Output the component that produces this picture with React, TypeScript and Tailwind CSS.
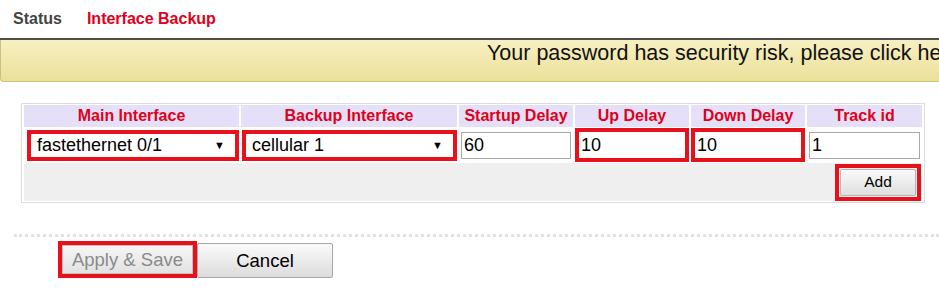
import React from 'react';

const RED = 'border-[#e8111b]';

function FakeSelect({ value }: { value: string }) {
  return (
    <div className={`border-4 ${RED} h-[31px] bg-white flex items-center justify-between pl-[6px] pr-[10px]`}>
      <span className="text-[18px] text-black leading-none">{value}</span>
      <span className="text-[11px] text-black leading-none">▼</span>
    </div>
  );
}

function TextBox({ value, marked }: { value: string; marked?: boolean }) {
  if (marked) {
    return (
      <div className={`border-4 ${RED} h-[34px] bg-white flex items-center px-[2px]`}>
        <span className="text-[18px] text-black leading-none">{value}</span>
      </div>
    );
  }
  return (
    <div className="h-[27px] mx-[2px] bg-white border border-[#a9a9a9] flex items-center px-[2px]">
      <span className="text-[18px] text-black leading-none">{value}</span>
    </div>
  );
}

export default function App() {
  const headers = ['Main Interface', 'Backup Interface', 'Startup Delay', 'Up Delay', 'Down Delay', 'Track id'];
  const widths = ['w-[215px]', 'w-[216px]', 'w-[114px]', 'w-[114px]', 'w-[114px]', 'w-[115px]'];

  return (
    <div className="w-[939px] h-[300px] bg-white overflow-hidden font-['Liberation_Sans',Arial,sans-serif]">
      {/* tabs */}
      <div className="h-[38px] flex items-center pl-[13px] gap-[25px] text-[16px] font-bold">
        <span className="text-[#444]">Status</span>
        <span className="text-[#e0001b]">Interface Backup</span>
      </div>
      <div className="h-[2px] bg-[#4d4d4d]" />

      {/* warning banner */}
      <div className="h-[42px] rounded-bl-[4px] border-l border-b border-[#cdbf7e] bg-gradient-to-b from-[#f8f0c2] to-[#ebe09a] flex items-start pt-[1px] pl-[486px] overflow-hidden whitespace-nowrap">
        <span className="text-[21.5px] leading-[24px] text-[#111]">Your password has security risk, please click here to change!</span>
      </div>

      {/* interface table */}
      <div className="pt-[21px] pl-[21px]">
        <table className="border border-[#dcdcdc] border-separate border-spacing-x-[2px] border-spacing-y-[1px]">
          <thead>
            <tr>
              {headers.map((h, i) => (
                <th key={h} className={`${widths[i]} h-[22px] bg-[#e5e0f7] text-[#e0001b] text-[16px] font-bold text-center leading-none p-0`}>
                  {h}
                </th>
              ))}
            </tr>
          </thead>
          <tbody>
            <tr>
              <td className="p-0 pl-[3px]"><FakeSelect value="fastethernet 0/1" /></td>
              <td className="p-0 pl-[1px]"><FakeSelect value="cellular 1" /></td>
              <td className="p-0"><TextBox value="60" /></td>
              <td className="p-0"><TextBox value="10" marked /></td>
              <td className="p-0"><TextBox value="10" marked /></td>
              <td className="p-0"><TextBox value="1" /></td>
            </tr>
            <tr>
              <td colSpan={6} className="bg-[#efefef] h-[38px] p-0">
                <div className="flex justify-end pr-[1px]">
                  <div className={`border-4 ${RED} w-[86px] h-[37px] flex`}>
                    <button className="flex-1 m-[1px] border border-[#b5b5b5] rounded-[2px] bg-gradient-to-b from-[#fafafa] to-[#dedede] text-[15.5px] text-black">
                      Add
                    </button>
                  </div>
                </div>
              </td>
            </tr>
          </tbody>
        </table>
      </div>

      {/* dotted separator */}
      <div className="mt-[31px] ml-[14px] border-t-[3px] border-dotted border-[#e2e2e2]" />

      {/* actions */}
      <div className="mt-[4px] pl-[58px] flex items-end">
        <div className={`border-4 ${RED} w-[139px] h-[37px] flex`}>
          <button className="flex-1 border border-[#c0c0c0] bg-gradient-to-b from-[#f6f6f6] to-[#e2e2e2] text-[18.5px] text-[#8a8a8a]">
            Apply &amp; Save
          </button>
        </div>
        <button className="w-[136px] h-[35px] border border-[#a8a8a8] rounded-[2px] bg-gradient-to-b from-[#fbfbfb] to-[#dcdcdc] text-[18.5px] text-black">
          Cancel
        </button>
      </div>
    </div>
  );
}
